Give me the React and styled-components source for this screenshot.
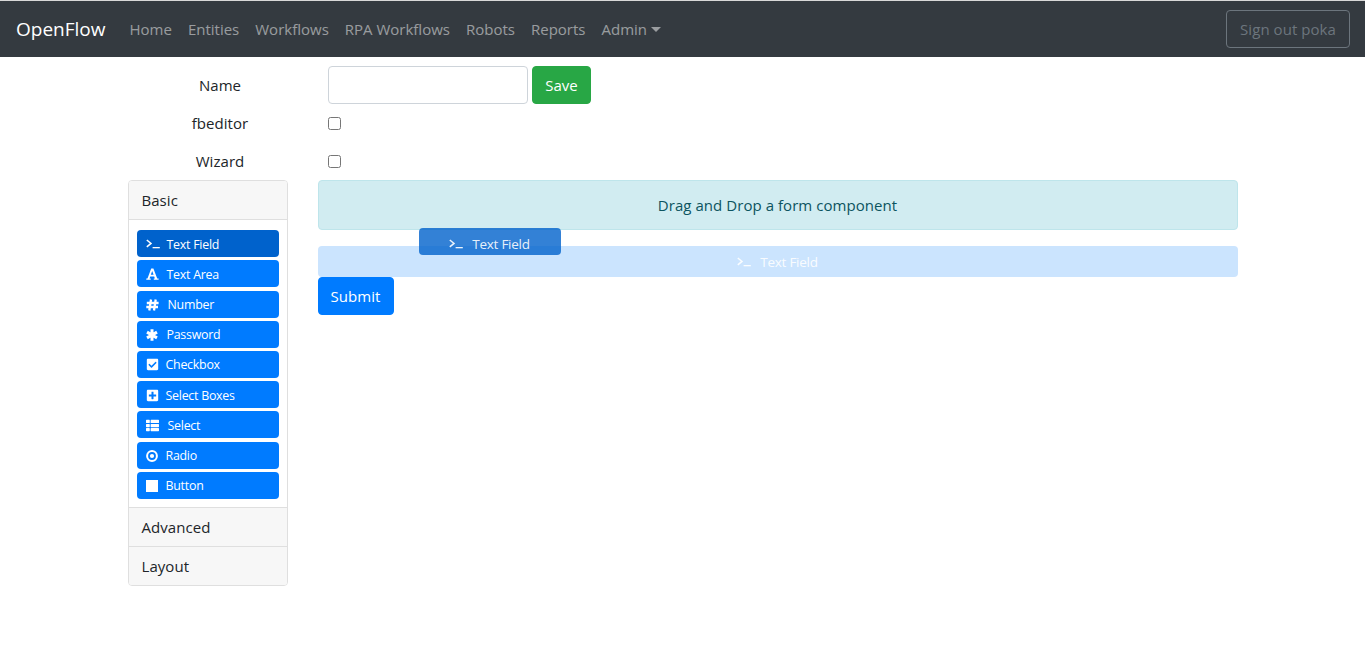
import React from 'react'
import styled, { createGlobalStyle } from 'styled-components'
import { FaCheckSquare, FaPlusSquare, FaThList } from 'react-icons/fa'

const Global = createGlobalStyle`
  * { box-sizing: border-box; }
  body {
    margin: 0;
    background: #fff;
    color: #212529;
    font-family: "Open Sans", "Noto Sans", sans-serif;
    font-size: 15px;
    letter-spacing: 0.05px;
  }
`

const TopBar = styled.nav`
  height: 57px;
  border-top: 1px solid #d8d8d8;
  background: #343a40;
  display: flex;
  align-items: center;
  padding: 0 15px 0 16px;
`
const Brand = styled.div`
  color: #fff;
  font-size: 19px;
  letter-spacing: 0;
  margin-right: 16px;
`
const NavLink = styled.div`
  color: rgba(255, 255, 255, 0.5);
  letter-spacing: 0;
  padding: 0 8px;
  display: flex;
  align-items: center;
`
const Caret = styled.span`
  margin-left: 4px;
  border-top: 5px solid;
  border-left: 5px solid transparent;
  border-right: 5px solid transparent;
`
const SignOut = styled.button`
  margin-left: auto;
  width: 124px;
  height: 38px;
  background: transparent;
  border: 1px solid #6c757d;
  border-radius: 4px;
  color: #6c757d;
  font: inherit;
  letter-spacing: inherit;
`
const Container = styled.main`
  width: 1110px;
  margin: 9px 0 0 127.5px;
`
const FieldRow = styled.div`
  height: 38px;
  display: flex;
  align-items: center;
`
const FieldLabel = styled.label`
  width: 185px;
  margin-right: 15.5px;
  text-align: center;
`
const NameInput = styled.input`
  width: 200px;
  height: 38px;
  border: 1px solid #ced4da;
  border-radius: 4px;
  margin-right: 4px;
`
const Check = styled.input.attrs({ type: 'checkbox' })`
  margin: 0;
  width: 13px;
  height: 13px;
`
const SaveButton = styled.button`
  height: 38px;
  width: 59px;
  border: 1px solid #28a745;
  border-radius: 4px;
  background: #28a745;
  color: #fff;
  font: inherit;
  letter-spacing: inherit;
`
const Builder = styled.div`
  display: grid;
  grid-template-columns: 160px 920px;
  column-gap: 30px;
  align-items: start;
`
const Accordion = styled.aside`
  border: 1px solid #dfdfdf;
  border-radius: 4px;
  background: #fff;
  overflow: hidden;
`
const SectionHead = styled.div`
  height: 39px;
  background: #f7f7f7;
  padding-left: 13px;
  display: flex;
  align-items: center;
  border-top: ${p => (p.$first ? 'none' : '1px solid #dfdfdf')};
  border-bottom: ${p => (p.$first ? '1px solid #dfdfdf' : 'none')};
`
const SectionBody = styled.div`
  padding: 10.2px 8px 4.8px 8px;
`
const ToolButton = styled.div`
  height: 27px;
  margin-bottom: 3.2px;
  padding: 1px 0 0 9px;
  background: ${p => (p.$active ? '#0062cc' : '#007bff')};
  border-radius: 4px;
  color: #fff;
  font-size: 12.4px;
  letter-spacing: -0.25px;
  display: flex;
  align-items: center;
`
const IconSlot = styled.span`
  width: ${p => p.$w}px;
  display: flex;
  align-items: center;
  flex: none;
`
const Canvas = styled.section`
  position: relative;
`
const DropHint = styled.div`
  height: 50px;
  background: #d1ecf1;
  border: 1px solid #bee5eb;
  border-radius: 4px;
  color: #0c5460;
  display: flex;
  align-items: center;
  justify-content: center;
  margin-bottom: 16px;
`
const Ghost = styled.div`
  height: 31px;
  padding-top: 1px;
  background: #cbe4fe;
  border-radius: 4px;
  color: rgba(255, 255, 255, 0.9);
  font-size: 13.5px;
  letter-spacing: -0.25px;
  display: flex;
  align-items: center;
  justify-content: center;
`
const DragHelper = styled.div`
  position: absolute;
  left: 101px;
  top: 48px;
  width: 142px;
  height: 27px;
  padding-top: 4px;
  background: rgba(0, 98, 204, 0.8);
  border-radius: 4px;
  color: rgba(255, 255, 255, 0.9);
  font-size: 13.5px;
  letter-spacing: -0.25px;
  display: flex;
  align-items: center;
  justify-content: center;
`
const SubmitButton = styled.button`
  display: block;
  width: 76px;
  height: 38px;
  border: 1px solid #007bff;
  border-radius: 4px;
  background: #007bff;
  color: #fff;
  font: inherit;
  letter-spacing: inherit;
`

const TerminalIcon = () => (
  <svg width="14" height="10" viewBox="0 0 14 10">
    <path d="M0.8 1 L5 4.4 L0.8 7.8" fill="none" stroke="currentColor" strokeWidth="1.5" />
    <rect x="6.6" y="8" width="7.2" height="1.3" fill="currentColor" />
  </svg>
)
const FontIcon = () => (
  <svg width="13" height="12" viewBox="0 0 13 12">
    <path
      fillRule="evenodd"
      fill="currentColor"
      d="M5.2 0.4 H7.4 L11.2 10.4 H12.6 V11.8 H7.8 V10.4 H8.9 L8.2 8.4 H4.2 L3.5 10.4 H4.7 V11.8 H0.3 V10.4 H1.5 Z M4.8 6.8 H7.6 L6.2 3 Z"
    />
  </svg>
)
const HashIcon = () => (
  <svg width="13" height="12" viewBox="0 0 13 12">
    <path
      d="M5 0.5 L3.3 11.5 M9.7 0.5 L8 11.5 M0.8 4 H12.6 M0.3 8 H12"
      fill="none"
      stroke="currentColor"
      strokeWidth="2.3"
    />
  </svg>
)
const AsteriskIcon = () => (
  <svg width="12" height="12" viewBox="0 0 12 12">
    <path
      d="M6 0.3 V11.7 M1 3.1 L11 8.9 M11 3.1 L1 8.9"
      fill="none"
      stroke="currentColor"
      strokeWidth="3"
    />
  </svg>
)
const DotCircleIcon = () => (
  <svg width="12" height="12" viewBox="0 0 12 12">
    <circle cx="6" cy="6" r="4.9" fill="none" stroke="currentColor" strokeWidth="2" />
    <circle cx="6" cy="6" r="2.1" fill="currentColor" />
  </svg>
)
const StopIcon = () => (
  <svg width="12" height="12" viewBox="0 0 12 12">
    <rect width="12" height="12" fill="currentColor" />
  </svg>
)

const tools = [
  { label: 'Text Field', icon: <TerminalIcon />, active: true, w: 21 },
  { label: 'Text Area', icon: <FontIcon />, w: 21 },
  { label: 'Number', icon: <HashIcon />, w: 22 },
  { label: 'Password', icon: <AsteriskIcon />, w: 21 },
  { label: 'Checkbox', icon: <FaCheckSquare size={13} />, w: 20 },
  { label: 'Select Boxes', icon: <FaPlusSquare size={13} />, w: 20 },
  { label: 'Select', icon: <FaThList size={13} />, w: 22 },
  { label: 'Radio', icon: <DotCircleIcon />, w: 20 },
  { label: 'Button', icon: <StopIcon />, w: 20 },
]

const links = ['Home', 'Entities', 'Workflows', 'RPA Workflows', 'Robots', 'Reports']

export default function App() {
  return (
    <>
      <Global />
      <TopBar>
        <Brand>OpenFlow</Brand>
        {links.map(l => <NavLink key={l}>{l}</NavLink>)}
        <NavLink>Admin<Caret /></NavLink>
        <SignOut>Sign out poka</SignOut>
      </TopBar>
      <Container>
        <FieldRow>
          <FieldLabel>Name</FieldLabel>
          <NameInput />
          <SaveButton>Save</SaveButton>
        </FieldRow>
        <FieldRow>
          <FieldLabel>fbeditor</FieldLabel>
          <Check />
        </FieldRow>
        <FieldRow>
          <FieldLabel>Wizard</FieldLabel>
          <Check />
        </FieldRow>
        <Builder>
          <Accordion>
            <SectionHead $first>Basic</SectionHead>
            <SectionBody>
              {tools.map(t => (
                <ToolButton key={t.label} $active={t.active}>
                  <IconSlot $w={t.w}>{t.icon}</IconSlot>
                  {t.label}
                </ToolButton>
              ))}
            </SectionBody>
            <SectionHead>Advanced</SectionHead>
            <SectionHead>Layout</SectionHead>
          </Accordion>
          <Canvas>
            <DropHint>Drag and Drop a form component</DropHint>
            <Ghost><IconSlot $w={23}><TerminalIcon /></IconSlot>Text Field</Ghost>
            <SubmitButton>Submit</SubmitButton>
            <DragHelper><IconSlot $w={23}><TerminalIcon /></IconSlot>Text Field</DragHelper>
          </Canvas>
        </Builder>
      </Container>
    </>
  )
}
